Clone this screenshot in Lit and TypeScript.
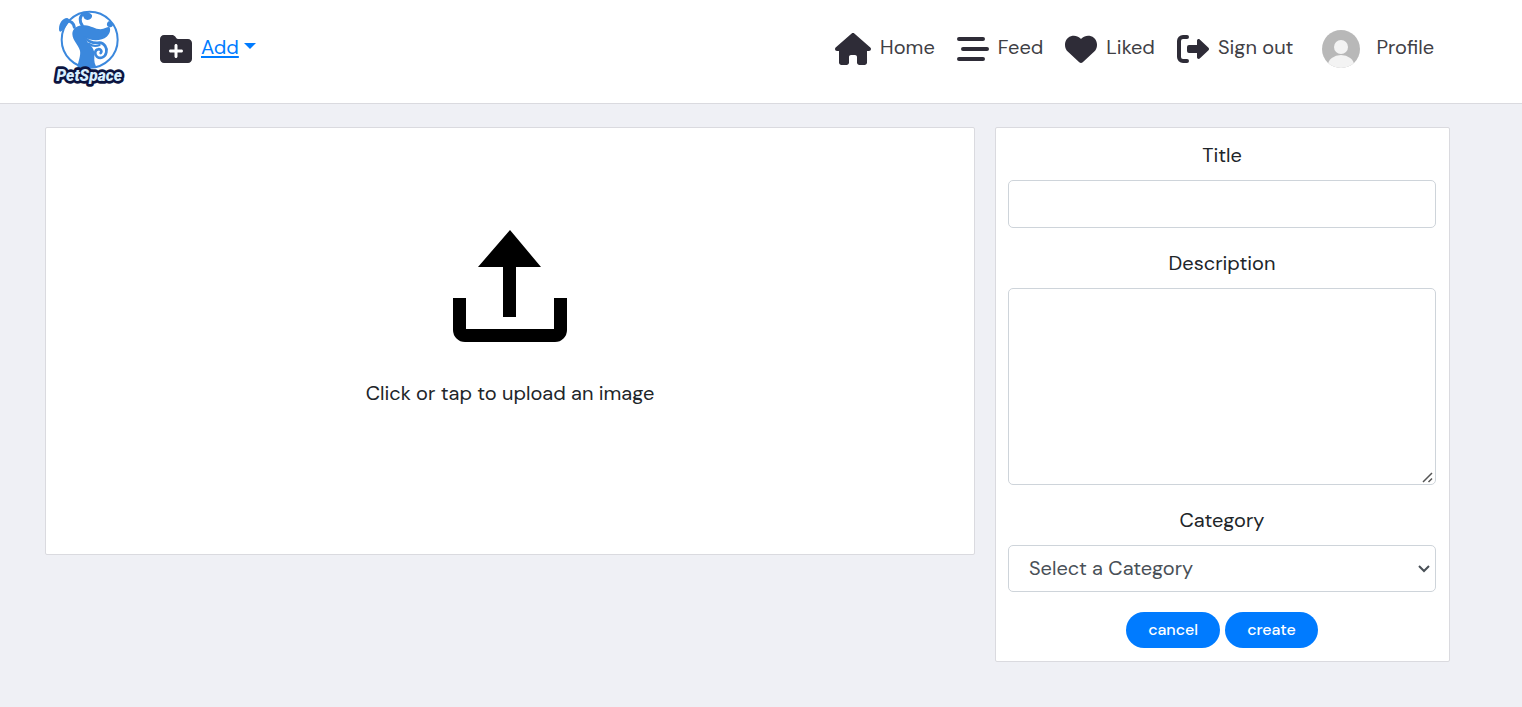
import { LitElement, html, css, svg } from "lit";
import { customElement } from "lit/decorators.js";

const icons = {
  house: svg`<path d="M575.8 255.5c0 18-15 32.1-32 32.1h-32l.7 160.2c0 2.7-.2 5.4-.5 8.1V472c0 22.1-17.9 40-40 40H456c-1.1 0-2.2 0-3.3-.1c-1.4 .1-2.8 .1-4.2 .1H416 392c-22.1 0-40-17.9-40-40V448 384c0-17.7-14.3-32-32-32H256c-17.7 0-32 14.3-32 32v64 24c0 22.1-17.9 40-40 40H160 128.1c-1.5 0-3-.1-4.5-.2c-1.2 .1-2.4 .2-3.6 .2H104c-22.1 0-40-17.9-40-40V360c0-.9 0-1.9 .1-2.8V287.6H32c-18 0-32-14-32-32.1c0-9 3-17 10-24L266.4 8c7-7 15-8 22-8s15 2 21 7L564.8 231.5c8 7 12 15 11 24z"/>`,
  feed: svg`<path d="M32 64H416a32 32 0 0 1 0 64H32a32 32 0 0 1 0-64zM96 224H480a32 32 0 0 1 0 64H96a32 32 0 0 1 0-64zM32 384H416a32 32 0 0 1 0 64H32a32 32 0 0 1 0-64z"/>`,
  heart: svg`<path d="M47.6 300.4L228.3 469.1c7.5 7 17.4 10.9 27.7 10.9s20.2-3.9 27.7-10.9L464.4 300.4c30.4-28.3 47.6-68 47.6-109.5v-5.8c0-69.9-50.5-129.5-119.4-141C347 36.5 300.6 51.4 268 84L256 96 244 84c-32.6-32.6-79-47.5-124.6-39.9C50.5 55.6 0 115.2 0 185.1v5.8c0 41.5 17.2 81.2 47.6 109.5z"/>`,
  signOut: svg`<path d="M160 32a32 32 0 0 1 0 64H96a32 32 0 0 0-32 32V384a32 32 0 0 0 32 32h64a32 32 0 0 1 0 64H96a96 96 0 0 1-96-96V128a96 96 0 0 1 96-96zM504 237L364 103c-17-15-44-4-44 20v69H192a32 32 0 0 0-32 32v64a32 32 0 0 0 32 32H320v69c0 24 27 35 44 20L504 275c11-12 11-26 0-38z"/>`,
  folderPlus: svg`<path d="M512 416c0 35.3-28.7 64-64 64H64c-35.3 0-64-28.7-64-64V96C0 60.7 28.7 32 64 32H192c20.1 0 39.1 9.5 51.2 25.6l19.2 25.6c6 8.1 15.5 12.8 25.6 12.8H448c35.3 0 64 28.7 64 64V416zM232 376c0 13.3 10.7 24 24 24s24-10.7 24-24V312h64c13.3 0 24-10.7 24-24s-10.7-24-24-24H280V200c0-13.3-10.7-24-24-24s-24 10.7-24 24v64H168c-13.3 0-24 10.7-24 24s10.7 24 24 24h64v64z"/>`,
};

const links = [
  { label: "Home", icon: icons.house, width: 576 },
  { label: "Feed", icon: icons.feed, width: 512 },
  { label: "Liked", icon: icons.heart, width: 512 },
  { label: "Sign out", icon: icons.signOut, width: 512 },
];

@customElement("app-nav")
export class AppNav extends LitElement {
  static styles = css`
    :host {
      display: block;
      background: #fff;
      border-bottom: 1px solid #dadadf;
    }
    .bar {
      display: flex;
      align-items: center;
      height: 103px;
      box-sizing: border-box;
      padding: 0 88px 6px 53px;
    }
    .brand {
      display: block;
      margin-right: 35px;
    }
    .logo {
      display: block;
      width: 72px;
      height: 78px;
    }
    .wordmark {
      font: italic 900 47px "Roboto", sans-serif;
      fill: #d8efff;
      stroke: #0c1440;
      stroke-width: 16px;
      stroke-linejoin: round;
      paint-order: stroke;
    }
    .links {
      display: flex;
      align-items: center;
      gap: 22px;
      margin-left: auto;
    }
    .link,
    .add {
      display: flex;
      align-items: center;
      gap: 9px;
      color: #3f4045;
      text-decoration: none;
      line-height: 30px;
    }
    .text {
      padding-bottom: 3px;
    }
    .icon {
      display: block;
      height: 32px;
      fill: #2e2c37;
    }
    .toggle {
      color: #007bff;
      text-decoration: underline;
      text-underline-offset: 2px;
      text-decoration-thickness: 2px;
    }
    .caret {
      border: 6px solid transparent;
      border-top-color: #007bff;
      border-bottom: 0;
      margin-left: -4px;
      margin-bottom: 5px;
    }
    .profile {
      gap: 16px;
      margin-left: 7px;
    }
    .avatar {
      display: block;
      width: 38px;
      height: 38px;
    }
  `;

  render() {
    return html`
      <nav class="bar">
        <a class="brand" href="#" aria-label="PetSpace">
          <svg class="logo" viewBox="39 30 216 234">
            <circle cx="149" cy="119" r="84" fill="#fff" stroke="#3b88dd" stroke-width="6" />
            <path
              fill="#3b88dd"
              d="M112 204C114 184 123 168 120 152C116 136 98 122 97 102C97 84 114 75 134 76C154 77 164 88 182 88C194 87 201 80 208 81C213 88 210 102 200 110C187 121 158 126 134 112C140 122 143 130 152 137C160 144 165 156 163 170C162 184 164 194 172 204Z"
            />
            <path
              fill="none"
              stroke="#3b88dd"
              stroke-linecap="round"
              stroke-width="8"
              d="M134 112C147 127 164 130 178 128C193 129 202 143 199 157C196 172 181 178 171 170C162 162 165 150 174 148C182 146 187 154 182 159"
            />
            <path
              fill="none"
              stroke="#3b88dd"
              stroke-linecap="round"
              stroke-width="6"
              d="M146 131C158 140 170 139 179 135"
            />
            <path
              fill="none"
              stroke="#3b88dd"
              stroke-linecap="round"
              stroke-width="9"
              d="M103 82C101 69 92 62 78 63M127 77C118 64 118 49 130 42"
            />
            <path
              fill="#3b88dd"
              d="M82 54C69 53 57 69 57 87C57 94 60 97 64 94C71 89 80 79 86 67C89 60 88 56 82 54ZM126 38C137 34 153 38 156 46C158 55 146 64 136 58C129 54 133 48 124 46ZM202 68C206 61 216 64 219 72C221 80 212 84 205 80C200 77 200 72 202 68Z"
            />
            <text class="wordmark" x="49" y="243">PetSpace</text>
          </svg>
        </a>
        <a class="add" href="#">
          <svg class="icon" viewBox="0 0 512 512">${icons.folderPlus}</svg>
          <span class="text toggle">Add</span>
          <span class="caret"></span>
        </a>
        <div class="links">
          ${links.map(
            (l) => html`<a class="link" href="#">
              <svg class="icon" viewBox="0 0 ${l.width} 512">${l.icon}</svg>
              <span class="text">${l.label}</span>
            </a>`
          )}
          <a class="link profile" href="#">
            <svg class="avatar" viewBox="0 0 38 38">
              <defs><clipPath id="round"><circle cx="19" cy="19" r="19" /></clipPath></defs>
              <g clip-path="url(#round)">
                <rect width="38" height="38" fill="#b8b8b8" />
                <circle cx="19" cy="17" r="7" fill="#f3f3f3" />
                <ellipse cx="19" cy="35" rx="13" ry="10" fill="#f3f3f3" />
              </g>
            </svg>
            <span class="text">Profile</span>
          </a>
        </div>
      </nav>
    `;
  }
}

@customElement("app-root")
export class AppRoot extends LitElement {
  static styles = css`
    :host {
      display: block;
      min-height: 100vh;
      background: #eff0f5;
      color: #212529;
      font: 20px/30px "DM Sans", "Inter", sans-serif;
    }
    .page {
      display: grid;
      grid-template-columns: 186fr 91fr;
      align-items: start;
      gap: 20px;
      padding: 23px 72px 45px 45px;
    }
    .card {
      box-sizing: border-box;
      background: #fff;
      border: 1px solid #dadadf;
      border-radius: 2px;
    }
    .upload {
      display: flex;
      flex-direction: column;
      align-items: center;
      gap: 36px;
      padding: 102px 12px 146px;
      cursor: pointer;
    }
    .arrow {
      display: block;
      width: 114px;
      height: 112px;
    }
    .form {
      display: flex;
      flex-direction: column;
      gap: 20px;
      padding: 12px 13px 13px 12px;
    }
    .field {
      display: flex;
      flex-direction: column;
      gap: 10px;
      text-align: center;
    }
    .control {
      box-sizing: border-box;
      display: block;
      width: 100%;
      height: 48px;
      margin: 0;
      padding: 6px 20px;
      border: 1px solid #ced4da;
      border-radius: 5px;
      background: #fff;
      color: #495057;
      font: inherit;
    }
    .area {
      height: 197px;
      resize: vertical;
    }
    .area::-webkit-resizer {
      background: url("data:image/svg+xml,%3Csvg xmlns='http://www.w3.org/2000/svg' width='15' height='15'%3E%3Cpath d='M3 13L12 4M8.500 13L12 9.500' stroke='%23555' stroke-width='1.500' fill='none'/%3E%3C/svg%3E")
        no-repeat;
    }
    .select {
      height: 47px;
      padding: 7px 20px 8px;
      appearance: none;
      background: #fff
        url("data:image/svg+xml,%3Csvg xmlns='http://www.w3.org/2000/svg' width='12' height='8'%3E%3Cpath d='M1 1L6 6L11 1' stroke='%23495057' stroke-width='2' fill='none'/%3E%3C/svg%3E")
        no-repeat right 5px center;
    }
    .actions {
      display: flex;
      justify-content: center;
      gap: 5px;
    }
    .button {
      height: 36px;
      padding: 0 22px;
      border: 0;
      border-radius: 18px;
      background: #007bff;
      color: #fff;
      font: 500 16px/24px "DM Sans", "Inter", sans-serif;
    }
  `;

  render() {
    return html`
      <app-nav></app-nav>
      <main class="page">
        <label class="card upload" for="image">
          <svg class="arrow" viewBox="0 0 114 112">
            <path d="M57 0L88 37H63V87H50V37H25ZM0 68H13V99H101V68H114V100A12 12 0 0 1 102 112H12A12 12 0 0 1 0 100Z" />
          </svg>
          <span>Click or tap to upload an image</span>
          <input id="image" type="file" accept="image/*" hidden />
        </label>
        <form class="card form">
          <div class="field">
            <label for="title">Title</label>
            <input class="control" id="title" type="text" />
          </div>
          <div class="field">
            <label for="description">Description</label>
            <textarea class="control area" id="description"></textarea>
          </div>
          <div class="field">
            <label for="category">Category</label>
            <select class="control select" id="category">
              <option>Select a Category</option>
            </select>
          </div>
          <div class="actions">
            <button class="button" type="button">cancel</button>
            <button class="button" type="button">create</button>
          </div>
        </form>
      </main>
    `;
  }
}
